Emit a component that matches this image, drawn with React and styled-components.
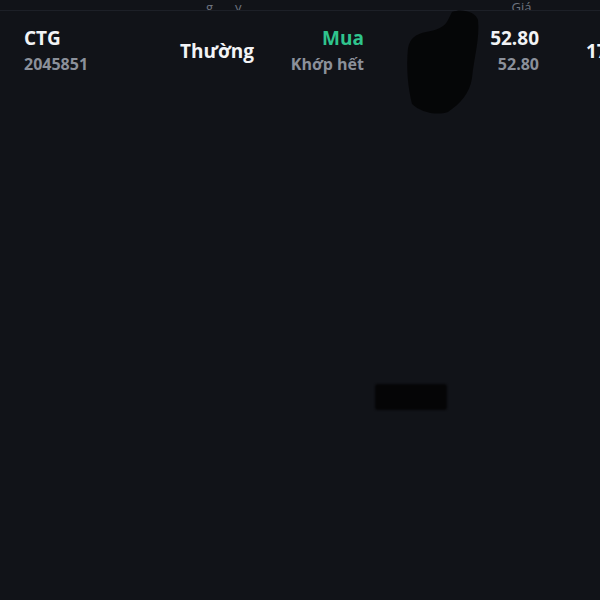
import styled, { createGlobalStyle } from "styled-components";

const Global = createGlobalStyle`
  html, body {
    margin: 0;
    background: #111318;
  }
  body {
    font-family: "Open Sans", "Noto Sans", sans-serif;
  }
`;

const Page = styled.div`
  position: relative;
  width: 600px;
  height: 600px;
  overflow: hidden;
  background: #111318;
`;

const Header = styled.div`
  height: 10px;
  display: flex;
  align-items: flex-end;
  overflow: hidden;
  border-bottom: 1px solid #1d2027;
`;

const HeadLabel = styled.span`
  position: relative;
  top: 4px;
  margin-left: ${(p) => p.$left}px;
  font-size: 13px;
  color: #6f7580;
  line-height: 1;
`;

const Row = styled.div`
  display: flex;
  align-items: center;
  height: 80px;
  padding-left: 24px;
`;

const Cell = styled.div`
  display: flex;
  flex-direction: column;
  gap: 6px;
  width: ${(p) => p.$w}px;
  align-items: ${(p) => (p.$right ? "flex-end" : "flex-start")};
  flex-shrink: 0;
`;

const Main = styled.span`
  font-size: 19px;
  font-weight: 700;
  color: ${(p) => p.$color || "#f2f3f5"};
  line-height: 21px;
`;

const Sub = styled.span`
  font-size: 16px;
  font-weight: 700;
  color: #8b909a;
  line-height: 19px;
`;

const Blot = styled.svg`
  position: absolute;
  left: 400px;
  top: 8px;
`;

const Mask = styled.div`
  position: absolute;
  left: 375px;
  top: 384px;
  width: 72px;
  height: 26px;
  background: #050506;
  border-radius: 3px;
  filter: blur(1px);
`;

export default function App() {
  return (
    <Page>
      <Global />
      <Header>
        <HeadLabel $left={206}>g</HeadLabel>
        <HeadLabel $left={22}>y</HeadLabel>
        <HeadLabel $left={270}>Giá</HeadLabel>
      </Header>
      <Row>
        <Cell $w={156}>
          <Main>CTG</Main>
          <Sub>2045851</Sub>
        </Cell>
        <Cell $w={100}>
          <Main>Thường</Main>
        </Cell>
        <Cell $w={84} $right>
          <Main $color="#2fc48d">Mua</Main>
          <Sub>Khớp hết</Sub>
        </Cell>
        <Cell $w={175} $right>
          <Main>52.80</Main>
          <Sub>52.80</Sub>
        </Cell>
        <Cell $w={80} style={{ paddingLeft: 47 }}>
          <Main>17</Main>
        </Cell>
      </Row>
      <Blot width="85" height="110" viewBox="0 0 85 110">
        <path
          d="M52 4 C62 0 76 4 78 12 C80 30 74 50 72 70 C70 85 60 96 48 104 C36 108 20 104 12 96 C8 80 6 60 8 40 C10 30 16 26 26 24 C36 22 44 20 48 12 Z"
          fill="#050506"
          opacity="0.95"
        />
      </Blot>
      <Mask />
    </Page>
  );
}
